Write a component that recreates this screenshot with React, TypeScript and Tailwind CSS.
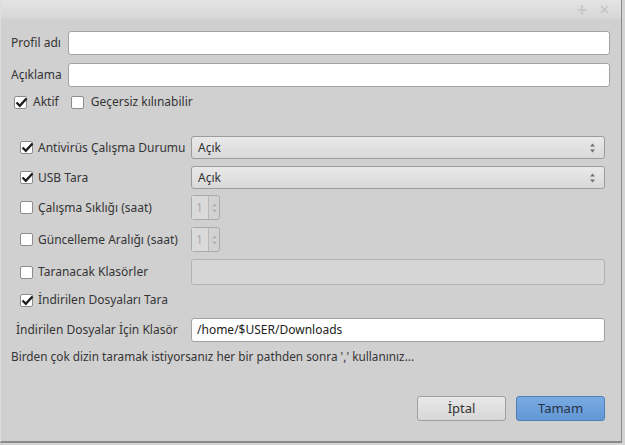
import React from 'react';

const font = { fontFamily: '"Noto Sans", "Open Sans", sans-serif' };

const Check = ({ checked }: { checked?: boolean }) => (
  <span className="relative flex h-[13px] w-[13px] shrink-0 items-center justify-center rounded-[2px] border border-[#8c8c8c] bg-white">
    {checked && (
      <svg width="13" height="11" viewBox="0 0 13 11" className="absolute left-[0px] top-[0px]">
        <path d="M1.5 5.5 L4.8 8.8 L11.5 1.5" fill="none" stroke="#1e1e1e" strokeWidth="2.4" />
      </svg>
    )}
  </span>
);

const Arrows = ({ color = '#6f6f6f' }: { color?: string }) => (
  <svg width="7" height="12" viewBox="0 0 7 12">
    <path d="M3.5 1.5 L6 4.5 L1 4.5 Z" fill={color} />
    <path d="M3.5 10.5 L6 7.5 L1 7.5 Z" fill={color} />
  </svg>
);

const Select = ({ value }: { value: string }) => (
  <div className="flex h-[23px] flex-1 items-center justify-between rounded-[3px] border border-[#9c9c9c] bg-gradient-to-b from-[#e9e9e9] to-[#d9d9d9] pl-[6px] pr-[8px] text-[12px] text-[#333]">
    <span>{value}</span>
    <Arrows />
  </div>
);

const Spin = () => (
  <div className="flex h-[25px] w-[29px] rounded-[3px] border border-[#aaaaaa] bg-[#d2d2d2]">
    <div className="flex w-[17px] items-center border-r border-[#b8b8b8] bg-[#dadada] pl-[4px] text-[12px] text-[#a8a8a8]">1</div>
    <div className="flex flex-1 items-center justify-center">
      <Arrows color="#b0b0b0" />
    </div>
  </div>
);

const GroupRow = ({ checked, label, h, mt, children }: { checked?: boolean; label: string; h: string; mt: string; children?: React.ReactNode }) => (
  <div className={`flex items-center pl-[9px] pr-[5px] ${h} ${mt}`}>
    <div className="flex w-[171px] shrink-0 items-center gap-[5px]">
      <Check checked={checked} />
      <span>{label}</span>
    </div>
    {children}
  </div>
);

export default function App() {
  return (
    <div className="h-[445px] w-[625px] overflow-hidden bg-[#d4d4d4]" style={font}>
      <div className="flex h-[443px] w-[622px] flex-col border-b-2 border-r border-[#8a8a8a] border-l border-l-[#dedede] bg-[#d0d0d0] text-[12px] text-[#353535]">
        {/* title bar */}
        <div className="flex h-[19px] shrink-0 items-center justify-end gap-[13px] bg-gradient-to-b from-[#e4e4e4] to-[#d6d6d6] pr-[12px]">
          <svg width="10" height="10" viewBox="0 0 10 10">
            <path d="M5 0.5 V9.5 M0.5 5 H9.5" stroke="#c4c4c4" strokeWidth="1.3" />
            <path d="M3.5 1.8 L5 0.5 L6.5 1.8 M3.5 8.2 L5 9.5 L6.5 8.2" fill="none" stroke="#c4c4c4" strokeWidth="1" />
          </svg>
          <svg width="9" height="9" viewBox="0 0 9 9">
            <path d="M1 1 L8 8 M8 1 L1 8" stroke="#c4c4c4" strokeWidth="1.6" />
          </svg>
        </div>

        <div className="flex flex-1 flex-col pl-[10px] pr-[11px]">
          <div className="mt-[12px] flex h-[24px] items-center">
            <span className="w-[57px] shrink-0">Profil adı</span>
            <div className="h-full flex-1 rounded-[3px] border border-[#a2a2a2] bg-white" />
          </div>
          <div className="mt-[8px] flex h-[24px] items-center">
            <span className="w-[57px] shrink-0">Açıklama</span>
            <div className="h-full flex-1 rounded-[3px] border border-[#a2a2a2] bg-white" />
          </div>
          <div className="mt-[7px] flex h-[16px] items-center pl-[3px]">
            <Check checked />
            <span className="ml-[6px]">Aktif</span>
            <span className="ml-[12px]"><Check /></span>
            <span className="ml-[7px]">Geçersiz kılınabilir</span>
          </div>

          <GroupRow checked label="Antivirüs Çalışma Durumu" h="h-[23px]" mt="mt-[26px]">
            <Select value="Açık" />
          </GroupRow>
          <GroupRow checked label="USB Tara" h="h-[23px]" mt="mt-[7px]">
            <Select value="Açık" />
          </GroupRow>
          <GroupRow label="Çalışma Sıklığı (saat)" h="h-[25px]" mt="mt-[6px]">
            <Spin />
          </GroupRow>
          <GroupRow label="Güncelleme Aralığı (saat)" h="h-[25px]" mt="mt-[7px]">
            <Spin />
          </GroupRow>
          <GroupRow label="Taranacak Klasörler" h="h-[26px]" mt="mt-[7px]">
            <div className="h-full flex-1 rounded-[3px] border border-[#b2b2b2] bg-[#d6d6d6]" />
          </GroupRow>
          <GroupRow checked label="İndirilen Dosyaları Tara" h="h-[16px]" mt="mt-[7px]" />

          <div className="mt-[10px] flex h-[24px] items-center pl-[5px] pr-[5px]">
            <span className="w-[175px] shrink-0">İndirilen Dosyalar İçin Klasör</span>
            <div className="flex h-full flex-1 items-center rounded-[3px] border border-[#a2a2a2] bg-white pl-[5px] text-[#222]">
              /home/$USER/Downloads
            </div>
          </div>

          <div className="mt-[7px] flex h-[16px] items-center text-[11.8px]">
            Birden çok dizin taramak istiyorsanız her bir pathden sonra ',' kullanınız...
          </div>

          <div className="mt-[31px] flex h-[25px] justify-end gap-[10px] pr-[5px]">
            <button className="w-[89px] rounded-[3px] border border-[#a0a0a0] bg-gradient-to-b from-[#e9e9e9] to-[#d7d7d7] text-[13px] text-[#333]">
              İptal
            </button>
            <button className="w-[89px] rounded-[3px] border border-[#4f80b8] bg-gradient-to-b from-[#79aae2] to-[#6398d6] text-[13px] text-[#263445]">
              Tamam
            </button>
          </div>
        </div>
      </div>
    </div>
  );
}
